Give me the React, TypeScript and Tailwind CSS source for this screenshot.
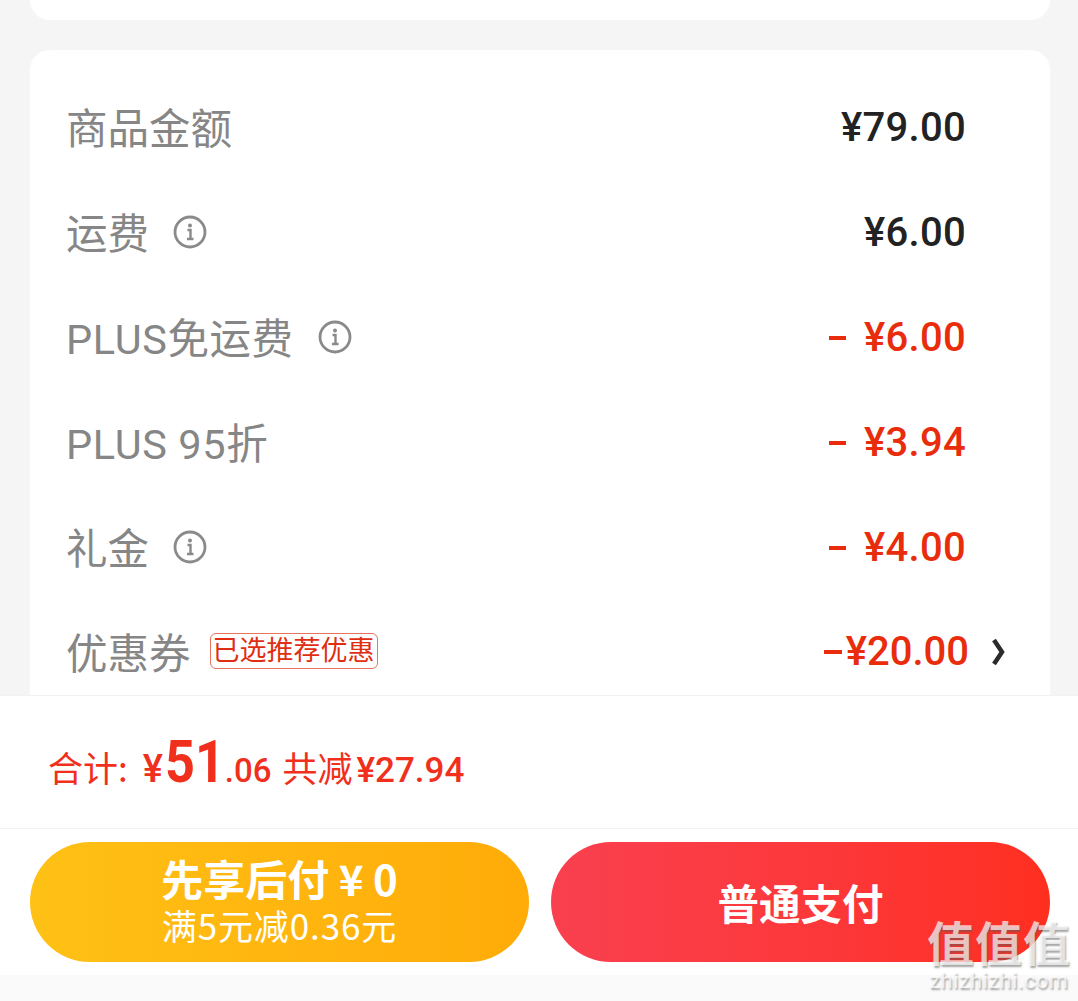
import React from 'react';

const CJK = '"Noto Sans CJK SC"';

const InfoIcon = () => (
    <svg width="34" height="34" viewBox="0 0 34 34" fill="none" className="shrink-0 -mt-[2px]">
        <circle cx="17" cy="17" r="15" stroke="#8a8a8a" strokeWidth="2.8" />
        <circle cx="17" cy="10.5" r="2" fill="#8a8a8a" />
        <path d="M14.5 15h3v8.5M14 24h6.5" stroke="#8a8a8a" strokeWidth="2.4" />
    </svg>
);

const Label = ({ children, wide }: { children: React.ReactNode; wide?: boolean }) => (
    <span className={`pt-1 font-['Roboto','Noto_Sans_CJK_SC',sans-serif] text-[41.5px] leading-none text-[#868686] ${wide ? 'tracking-[0.6px]' : ''}`}>
        {children}
    </span>
);

const Row = ({ label, value, info, red, wide }: { label: string; value: string; info?: boolean; red?: boolean; wide?: boolean }) => (
    <div className="flex h-[105px] items-center justify-between pl-[36px] pr-[84px]">
        <div className="flex items-center gap-[24px]">
            <Label wide={wide}>{label}</Label>
            {info && <InfoIcon />}
        </div>
        <div className="flex items-center gap-[18px] font-['Roboto',sans-serif] text-[40px] font-medium leading-none tracking-[0.3px]">
            {red && <span className="h-[4px] w-[17px] bg-[#e82c0c]" />}
            <span className={red ? 'text-[#e82c0c]' : 'text-[#222222]'}>{value}</span>
        </div>
    </div>
);

export default function App() {
    return (
        <div className="relative flex h-[1001px] w-[1078px] flex-col overflow-hidden bg-[#f5f5f5]" style={{ fontFamily: CJK }}>
            <div className="h-[695px] shrink-0 overflow-hidden pl-[30px] pr-[28px]">
                <div className="h-5 rounded-b-[20px] bg-white" />
                <div className="mt-[30px] h-[700px] rounded-t-[20px] bg-white pt-[25px]">
                    <Row label="商品金额" value="¥79.00" />
                    <Row label="运费" value="¥6.00" info />
                    <Row label="PLUS免运费" value="¥6.00" info red wide />
                    <Row label="PLUS 95折" value="¥3.94" red wide />
                    <Row label="礼金" value="¥4.00" info red />
                    <div className="flex h-[105px] items-center justify-between pl-[36px] pr-[44px]">
                        <div className="flex items-center gap-[19px]">
                            <Label>优惠券</Label>
                            <span className="-mt-[4px] flex h-[36px] w-[168px] items-center justify-center rounded-[6px] border border-[#e8735f] pb-[4px] text-[27px] leading-none text-[#e02e12]">
                                已选推荐优惠
                            </span>
                        </div>
                        <div className="-mt-[2px] flex items-center gap-[21px]">
                            <div className="flex items-center gap-[4px] font-['Roboto',sans-serif] text-[40px] font-medium leading-none text-[#e82c0c]">
                                <span className="h-[4px] w-[18px] bg-[#e82c0c]" />
                                <span>¥20.00</span>
                            </div>
                            <svg width="16" height="30" viewBox="0 0 16 30" fill="none">
                                <path d="M4 3l8 12-8 12" stroke="#2b2b2b" strokeWidth="4.5" />
                            </svg>
                        </div>
                    </div>
                </div>
            </div>

            <div className="flex h-[134px] shrink-0 items-center border-y border-[#f2f2f2] bg-white pl-[48px] text-[#f0301c]">
                <div className="flex items-baseline">
                    <span className="text-[35px] leading-none">合计:</span>
                    <span className="ml-[15px] font-['Roboto',sans-serif] text-[38px] font-medium leading-none">¥</span>
                    <span className="ml-[2px] mr-[-9px] inline-block origin-left scale-x-[0.87] font-['Roboto',sans-serif] text-[60px] font-bold leading-none">51</span>
                    <span className="font-['Roboto',sans-serif] text-[33px] font-medium leading-none">.06</span>
                    <span className="ml-[11px] text-[35px] leading-none">共减</span>
                    <span className="ml-[4px] font-['Roboto',sans-serif] text-[35px] font-medium leading-none">¥27.94</span>
                </div>
            </div>

            <div className="flex h-[146px] shrink-0 gap-[22px] bg-white pl-[30px] pr-[28px] pt-[13px]">
                <div className="flex h-[120px] w-[499px] shrink-0 flex-col items-center justify-center rounded-[60px] bg-gradient-to-r from-[#ffc115] to-[#ffab08] pt-[1px] text-white">
                    <span className="text-[42px] font-bold leading-[44px]">先享后付 ¥ 0</span>
                    <span className="text-[35px] leading-[50px] tracking-[0.9px]">满5元减0.36元</span>
                </div>
                <div className="flex h-[120px] w-[499px] shrink-0 items-center justify-center rounded-[60px] bg-gradient-to-r from-[#f9404f] to-[#ff2f1f] text-[41.5px] font-bold text-white">
                    普通支付
                </div>
            </div>

            <div className="flex-1 bg-[#fafafa]" />

            {/* site watermark */}
            <div className="absolute left-[927px] top-[913px] flex w-[144px] flex-col items-center text-white/70 [text-shadow:1px_2px_2px_rgba(90,90,90,0.55)]">
                <span className="text-[47px] font-bold leading-[56px] tracking-[1px]">值值值</span>
                <span className="font-['Roboto',sans-serif] text-[21.5px] leading-[24px] tracking-[0.6px]">zhizhizhi.com</span>
            </div>
        </div>
    );
}
